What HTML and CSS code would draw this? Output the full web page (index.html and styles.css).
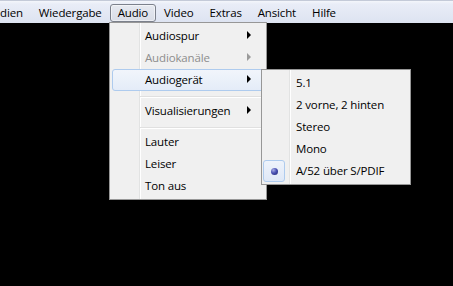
FILE: index.html
```html
<!DOCTYPE html>
<html lang="de">
<head>
    <meta charset="UTF-8">
    <meta name="viewport" content="width=device-width, initial-scale=1.0">
    <title>Audio Menü</title>
    <link rel="stylesheet" href="styles.css">
</head>
<body>
    <div class="window">
        <nav class="menubar">
            <span class="bar-item first">dien</span>
            <span class="bar-item">Wiedergabe</span>
            <span class="bar-item open">Audio</span>
            <span class="bar-item">Video</span>
            <span class="bar-item">Extras</span>
            <span class="bar-item">Ansicht</span>
            <span class="bar-item">Hilfe</span>
        </nav>
        <div class="screen"></div>

        <!-- Audio dropdown -->
        <ul class="menu main-menu">
            <li class="item"><span class="label">Audiospur</span><span class="arrow"></span></li>
            <li class="item disabled"><span class="label">Audiokanäle</span><span class="arrow"></span></li>
            <li class="item hover"><span class="label">Audiogerät</span><span class="arrow"></span></li>
            <li class="sep"></li>
            <li class="item"><span class="label">Visualisierungen</span><span class="arrow"></span></li>
            <li class="sep"></li>
            <li class="item"><span class="label">Lauter</span></li>
            <li class="item"><span class="label">Leiser</span></li>
            <li class="item"><span class="label">Ton aus</span></li>
        </ul>

        <!-- Audiogerät submenu -->
        <ul class="menu sub-menu">
            <li class="item"><span class="label">5.1</span></li>
            <li class="item"><span class="label">2 vorne, 2 hinten</span></li>
            <li class="item"><span class="label">Stereo</span></li>
            <li class="item"><span class="label">Mono</span></li>
            <li class="item checked"><span class="check"><span class="bullet"></span></span><span class="label">A/52 über S/PDIF</span></li>
        </ul>
    </div>
</body>
</html>
```

FILE: styles.css
```css
body {
    margin: 0;
    padding: 0;
    font-family: "Open Sans", "Noto Sans", sans-serif;
    font-size: 11.5px;
    letter-spacing: -0.15px;
    color: #000;
    background-color: #000;
}
.window {
    position: relative;
    width: 453px;
    height: 286px;
    overflow: hidden;
    display: flex;
    flex-direction: column;
}
.menubar {
    display: flex;
    align-items: center;
    height: 23px;
    box-sizing: border-box;
    padding-top: 1px;
    border-top: 1px solid #c4cad8;
    background: linear-gradient(#f4f6fb 0px, #e9edf7 3px, #dde3f1 100%);
    white-space: nowrap;
}
.bar-item {
    height: 18px;
    line-height: 15px;
    padding: 0 7px;
    border: 1px solid transparent;
    border-radius: 3px;
    box-sizing: border-box;
}
.bar-item.first {
    margin-left: -8px;
}
.bar-item.open {
    border-color: #7c818c;
    background: linear-gradient(#e6e9f0, #d9dde7);
    box-shadow: inset 0 0 0 1px rgba(255, 255, 255, 0.5);
}
.screen {
    flex: 1;
    background-color: #000;
}
.menu {
    position: absolute;
    list-style-type: none;
    margin: 0;
    padding: 2px;
    border: 1px solid #979797;
    background-color: #f0f0f0;
    background-image: linear-gradient(to right,
        transparent 29px, #e2e3e3 29px, #e2e3e3 30px,
        #ffffff 30px, #ffffff 31px, transparent 31px);
    box-sizing: border-box;
}
.main-menu {
    left: 109px;
    top: 22px;
    width: 158px;
}
.sub-menu {
    left: 261px;
    top: 69px;
    width: 150px;
    background-image: linear-gradient(to right,
        transparent 27px, #e2e3e3 27px, #e2e3e3 28px,
        #ffffff 28px, #ffffff 29px, transparent 29px);
}
.item {
    display: flex;
    align-items: center;
    height: 22px;
    padding: 0 12px 2px 32px;
    border: 1px solid transparent;
    border-radius: 3px;
    box-sizing: border-box;
}
.sub-menu .item {
    padding-left: 31px;
}
.item .label {
    flex: 1;
    white-space: nowrap;
}
.item.disabled {
    color: #8d8d8d;
}
.item.hover {
    border-color: #aecbee;
    background: linear-gradient(#f1f5fb, #e4ecf8);
}
.arrow {
    width: 0;
    height: 0;
    border-top: 4px solid transparent;
    border-bottom: 4px solid transparent;
    border-left: 4px solid #000;
}
.disabled .arrow {
    border-left-color: #9a9a9a;
}
.sep {
    height: 0;
    margin: 5px 0 2px 28px;
    border-top: 1px solid #e0e0e0;
    border-bottom: 1px solid #ffffff;
}
.sub-menu .item.checked {
    position: relative;
}
.check {
    position: absolute;
    left: -2px;
    top: -1px;
    width: 22px;
    height: 22px;
    box-sizing: border-box;
    border: 1px solid #aecbee;
    border-radius: 3px;
    background: linear-gradient(#eef3fb, #dfe8f7);
    display: flex;
    align-items: center;
    justify-content: center;
}
.bullet {
    width: 7px;
    height: 7px;
    border-radius: 50%;
    background: radial-gradient(circle at 35% 30%, #a9aee6 0, #4a52b4 45%, #1c2170 100%);
}
```
